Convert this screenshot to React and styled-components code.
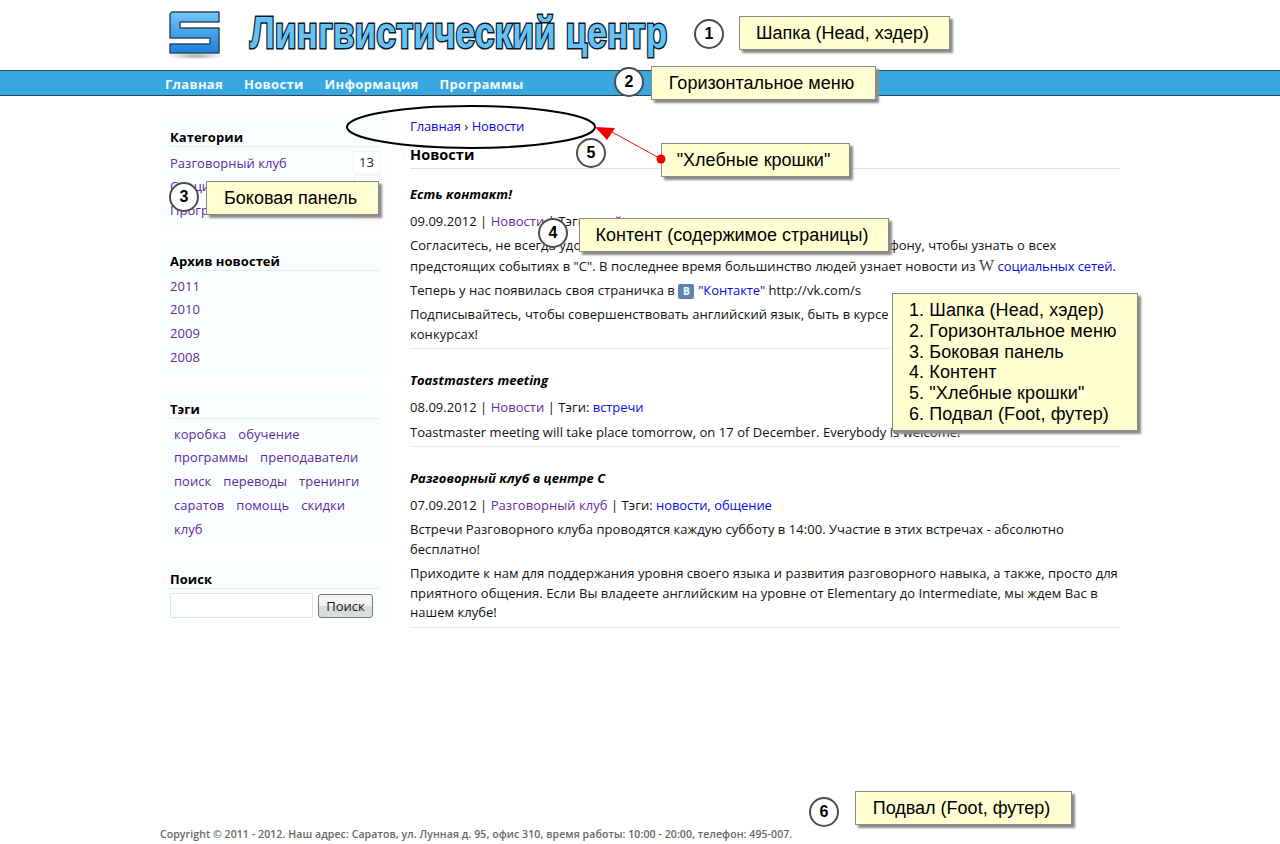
import React from 'react'
import styled, { createGlobalStyle } from 'styled-components'

const GlobalStyle = createGlobalStyle`
  html, body {
    margin: 0;
    padding: 0;
    background: white;
  }
  body {
    font-family: "Open Sans", "Noto Sans", sans-serif;
    font-size: 13px;
    letter-spacing: 0.04px;
    color: #111;
  }
  a {
    text-decoration: none;
  }
`

const Page = styled.div`
  position: relative;
  width: 1280px;
  height: 844px;
  overflow: hidden;
  display: flex;
  flex-direction: column;
`
const Wrap = styled.div`
  width: 960px;
  margin: 0 auto;
`
const Header = styled(Wrap)`
  height: 70px;
  display: flex;
  align-items: flex-start;
  box-sizing: border-box;
  padding: 10px 0 0 6px;
`
const SiteTitle = styled.div`
  margin: 0 0 0 24px;
  font-family: "Liberation Sans", sans-serif;
  font-size: 44px;
  font-weight: 700;
  line-height: 46px;
  white-space: nowrap;
  color: #66c1f5;
  -webkit-text-stroke: 3px #0b1a2a;
  paint-order: stroke fill;
  transform: scaleX(0.803);
  transform-origin: left center;
`
const NavBar = styled.div`
  height: 24px;
  background: #38a8e0;
  border-top: 1px solid #2f4552;
  border-bottom: 1px solid #2f4552;
`
const NavList = styled(Wrap)`
  display: flex;
  gap: 21px;
  padding-left: 5px;
  box-sizing: border-box;
`
const NavLink = styled.a`
  color: #f2f8fc;
  font-size: 13px;
  font-weight: 700;
  letter-spacing: 0.3px;
  line-height: 27px;
`
const Columns = styled(Wrap)`
  display: flex;
  gap: 20px;
  padding-top: 20px;
`
const Sidebar = styled.div`
  width: 230px;
  display: flex;
  flex-direction: column;
  gap: 12px;
`
const Widget = styled.div`
  background: #fbfeff;
  padding: 12px 10px ${props => props.bottom || 6}px;
`
const WidgetTitle = styled.div`
  font-size: 13px;
  font-weight: 700;
  color: #000;
  line-height: 18px;
  border-bottom: 1px solid #e8edf0;
  margin-bottom: 4px;
`
const CatRow = styled.div`
  display: flex;
  justify-content: space-between;
  align-items: center;
  height: 23.5px;
`
const Count = styled.span`
  min-width: 14px;
  padding: 0 5px;
  line-height: 21px;
  text-align: center;
  background: white;
  border: 1px solid #f0f3f4;
  color: #222;
`
const SideLink = styled.a`
  color: #5a2ba0;
`
const ArchiveRow = styled.div`
  height: 23.8px;
  line-height: 23.8px;
`
const TagCloud = styled.div`
  display: flex;
  flex-wrap: wrap;
  column-gap: 12px;
  padding: 0 4px;
`
const Tag = styled.a`
  color: #5a2ba0;
  line-height: 23.7px;
`
const SearchRow = styled.div`
  display: flex;
  align-items: center;
  gap: 5px;
`
const SearchInput = styled.input`
  width: 143px;
  height: 25px;
  box-sizing: border-box;
  background: white;
  border: 1px solid #dde3e8;
  border-radius: 2px;
`
const SearchButton = styled.button`
  width: 55px;
  height: 24px;
  padding: 0;
  font-family: inherit;
  font-size: 13px;
  color: #111;
  border: 1px solid #777;
  border-radius: 3px;
  background: linear-gradient(#f4f4f4 50%, #dcdcdc 50%);
`
const Content = styled.div`
  width: 710px;
`
const Crumbs = styled.div`
  line-height: 20px;
  height: 20px;
`
const BlueLink = styled.a`
  color: #0a0ae6;
  letter-spacing: -0.1px;
`
const PurpleLink = styled.a`
  color: #6a2a9c;
`
const PageTitle = styled.h1`
  margin: 0;
  padding: 9px 0 3px;
  font-size: 14.5px;
  line-height: 20px;
  color: #000;
  border-bottom: 1px solid #dfe3e5;
`
const Article = styled.div`
  padding-top: 16px;
  border-bottom: 1px solid #e8ebec;
  & + & {
    padding-top: 22px;
  }
`
const ArticleTitle = styled.div`
  font-weight: 700;
  font-style: italic;
  color: #000;
  line-height: 19px;
  margin-bottom: 8px;
`
const Paragraph = styled.p`
  margin: 0 0 4.75px;
  line-height: 19.5px;
  &:last-child {
    margin-bottom: 4px;
  }
`
const WikiMark = styled.span`
  font-family: "Liberation Serif", serif;
  font-size: 16px;
  color: #444;
`
const VkMark = styled.span`
  display: inline-block;
  width: 16px;
  height: 15px;
  line-height: 15px;
  margin-right: 4px;
  text-align: center;
  font-size: 10px;
  font-weight: 700;
  color: white;
  background: #5d84ae;
  border-radius: 2px;
`
const Footer = styled(Wrap)`
  margin-top: auto;
  padding-bottom: 2px;
  font-size: 10.5px;
  font-weight: 600;
  letter-spacing: 0.09px;
  line-height: 16px;
  color: #666;
`
const Note = styled.div`
  position: absolute;
  left: ${props => props.x}px;
  top: ${props => props.y}px;
  width: ${props => props.w}px;
  height: ${props => props.h}px;
  box-sizing: border-box;
  display: flex;
  align-items: center;
  justify-content: center;
  padding-right: 4px;
  font-family: "Liberation Sans", sans-serif;
  font-size: 18px;
  letter-spacing: 0;
  color: #000;
  white-space: nowrap;
  background: #ffffd2;
  border: 1px solid #8a8a8a;
  box-shadow: 3px 3px 2px #8c8c8c;
`
const NoteList = styled(Note)`
  display: block;
  padding: 6px 0 0 16px;
  letter-spacing: 0.1px;
  line-height: 20.8px;
`
const Marker = styled.div`
  position: absolute;
  left: ${props => props.x}px;
  top: ${props => props.y}px;
  width: 30px;
  height: 30px;
  box-sizing: border-box;
  display: flex;
  align-items: center;
  justify-content: center;
  font-family: "Liberation Sans", sans-serif;
  font-size: 16px;
  font-weight: 700;
  color: #000;
  background: white;
  border: 2px solid #4d4d4d;
  border-radius: 50%;
`
const Overlay = styled.svg`
  position: absolute;
  left: 0;
  top: 0;
  pointer-events: none;
`

const Logo = () => (
  <svg width='60' height='52' viewBox='0 0 60 52'>
    <defs>
      <linearGradient id='logoBlue' x1='0' y1='0' x2='0' y2='1'>
        <stop offset='0' stopColor='#72c6f5' />
        <stop offset='1' stopColor='#1a80e0' />
      </linearGradient>
      <radialGradient id='logoShade'>
        <stop offset='0' stopColor='#aaa' />
        <stop offset='1' stopColor='#fff' />
      </radialGradient>
    </defs>
    <ellipse cx='29' cy='46' rx='29' ry='3.5' fill='url(#logoShade)' />
    <path
      d='M6 2H53V12H14V18H53V43H4V34H44V28H4V4Z'
      fill='url(#logoBlue)'
      stroke='#33495c'
      strokeWidth='1.5'
      strokeLinejoin='round'
    />
  </svg>
)

const tags = [
  'коробка', 'обучение', 'программы', 'преподаватели', 'поиск', 'переводы',
  'тренинги', 'саратов', 'помощь', 'скидки', 'клуб'
]

export default function App () {
  return (
    <Page>
      <GlobalStyle />
      <Header>
        <Logo />
        <SiteTitle>Лингвистический центр</SiteTitle>
      </Header>
      <NavBar>
        <NavList>
          <NavLink>Главная</NavLink>
          <NavLink>Новости</NavLink>
          <NavLink>Информация</NavLink>
          <NavLink>Программы</NavLink>
        </NavList>
      </NavBar>
      <Columns>
        <Sidebar>
          <Widget>
            <WidgetTitle>Категории</WidgetTitle>
            <CatRow><SideLink>Разговорный клуб</SideLink><Count>13</Count></CatRow>
            <CatRow><SideLink>Специальное</SideLink><Count>5</Count></CatRow>
            <CatRow><SideLink>Программы</SideLink><Count>3</Count></CatRow>
          </Widget>
          <Widget>
            <WidgetTitle>Архив новостей</WidgetTitle>
            {['2011', '2010', '2009', '2008'].map(year => (
              <ArchiveRow key={year}><SideLink>{year}</SideLink></ArchiveRow>
            ))}
          </Widget>
          <Widget bottom={5}>
            <WidgetTitle>Тэги</WidgetTitle>
            <TagCloud>
              {tags.map(tag => <Tag key={tag}>{tag}</Tag>)}
            </TagCloud>
          </Widget>
          <Widget>
            <WidgetTitle>Поиск</WidgetTitle>
            <SearchRow>
              <SearchInput />
              <SearchButton>Поиск</SearchButton>
            </SearchRow>
          </Widget>
        </Sidebar>
        <Content>
          <Crumbs><BlueLink>Главная</BlueLink> › <BlueLink>Новости</BlueLink></Crumbs>
          <PageTitle>Новости</PageTitle>
          <Article>
            <ArticleTitle>Есть контакт!</ArticleTitle>
            <Paragraph>09.09.2012 | <PurpleLink>Новости</PurpleLink> | Тэги: <BlueLink>свой</BlueLink></Paragraph>
            <Paragraph>
              Согласитесь, не всегда удобно заходить на <BlueLink>сайт</BlueLink> или часто звонить по телефону, чтобы узнать о всех<br />
              предстоящих событиях в "С". В последнее время большинство людей узнает новости из <WikiMark>W</WikiMark> <BlueLink>социальных сетей</BlueLink>.
            </Paragraph>
            <Paragraph>Теперь у нас появилась своя страничка в <VkMark>В</VkMark><BlueLink>"Контакте"</BlueLink> http://vk.com/s</Paragraph>
            <Paragraph>Подписывайтесь, чтобы совершенствовать английский язык, быть в курсе всех новостей и участия в<br />конкурсах!</Paragraph>
          </Article>
          <Article>
            <ArticleTitle>Toastmasters meeting</ArticleTitle>
            <Paragraph>08.09.2012 | <PurpleLink>Новости</PurpleLink> | Тэги: <BlueLink>встречи</BlueLink></Paragraph>
            <Paragraph>Toastmaster meeting will take place tomorrow, on 17 of December. Everybody is welcome!</Paragraph>
          </Article>
          <Article>
            <ArticleTitle>Разговорный клуб в центре С</ArticleTitle>
            <Paragraph>07.09.2012 | <PurpleLink>Разговорный клуб</PurpleLink> | Тэги: <BlueLink>новости</BlueLink>, <BlueLink>общение</BlueLink></Paragraph>
            <Paragraph>Встречи Разговорного клуба проводятся каждую субботу в 14:00. Участие в этих встречах - абсолютно бесплатно!</Paragraph>
            <Paragraph>Приходите к нам для поддержания уровня своего языка и развития разговорного навыка, а также, просто для приятного общения. Если Вы владеете английским на уровне от Elementary до Intermediate, мы ждем Вас в нашем клубе!</Paragraph>
          </Article>
        </Content>
      </Columns>
      <Footer>Copyright © 2011 - 2012. Наш адрес: Саратов, ул. Лунная д. 95, офис 310, время работы: 10:00 - 20:00, телефон: 495-007.</Footer>

      <Overlay width='1280' height='844'>
        <ellipse cx='471' cy='127' rx='124' ry='21' fill='none' stroke='#000' strokeWidth='2' />
        <line x1='661' y1='159' x2='612' y2='132' stroke='#f01010' strokeWidth='1' />
        <polygon points='595,127 615,128 607,140' fill='#f00000' />
      </Overlay>

      <Marker x={694} y={19}>1</Marker>
      <Note x={739} y={16} w={211} h={34}>Шапка (Head, хэдер)</Note>
      <Marker x={614} y={67}>2</Marker>
      <Note x={651} y={66} w={225} h={34}>Горизонтальное меню</Note>
      <Marker x={169} y={182}>3</Marker>
      <Note x={206} y={181} w={173} h={34}>Боковая панель</Note>
      <Marker x={538} y={218}>4</Marker>
      <Note x={579} y={218} w={310} h={34}>Контент (содержимое страницы)</Note>
      <Marker x={576} y={138}>5</Marker>
      <Note x={661} y={143} w={189} h={34}>"Хлебные крошки"</Note>
      <Overlay width='1280' height='844'>
        <circle cx='661' cy='159' r='4.5' fill='#f00000' />
      </Overlay>
      <Marker x={809} y={797}>6</Marker>
      <Note x={855} y={791} w={217} h={34}>Подвал (Foot, футер)</Note>
      <NoteList x={892} y={293} w={246} h={138}>
        <div>1. Шапка (Head, хэдер)</div>
        <div>2. Горизонтальное меню</div>
        <div>3. Боковая панель</div>
        <div>4. Контент</div>
        <div>5. "Хлебные крошки"</div>
        <div>6. Подвал (Foot, футер)</div>
      </NoteList>
    </Page>
  )
}
